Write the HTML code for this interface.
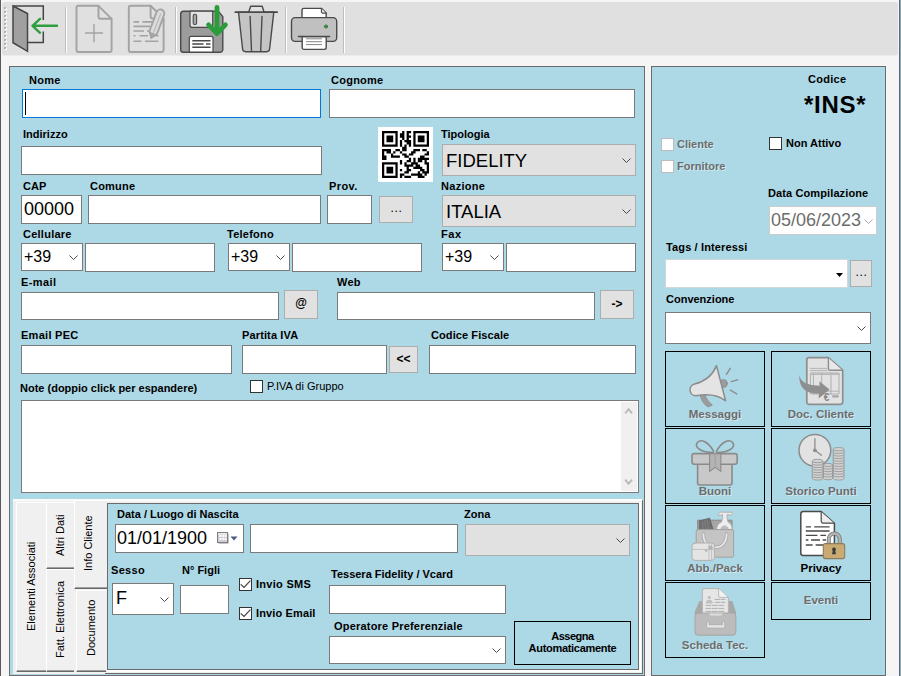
<!DOCTYPE html>
<html lang="it">
<head>
<meta charset="utf-8">
<title>Anagrafica Cliente</title>
<style>
*{box-sizing:border-box;margin:0;padding:0}
html,body{width:901px;height:676px;overflow:hidden;background:#f5f5f5;font-family:"Liberation Sans",sans-serif;font-size:11px;color:#000}
body{position:relative}
.abs,.l,.i,.c,.b,.cb,.pb{position:absolute}
.l{font-weight:bold;font-size:11px;line-height:13px;white-space:nowrap}
.n{font-weight:normal}
.i{background:#fff;border:1px solid #7a7a7a}
.c{background:#fff;border:1px solid #7a7a7a;font-size:16px;white-space:nowrap}
.c.g{background:#e1e1e1;border-color:#adadad;font-size:18.5px}
.c svg{position:absolute;right:4px;top:50%;margin-top:-2px}
.b{background:#e1e1e1;border:1px solid #adadad;text-align:center;font-size:12px;font-weight:bold}
.cb{width:13px;height:13px;background:#fff;border:1px solid #333}
.pb{border:1px solid #000;width:100px;height:76px;text-align:center;font-weight:bold;font-size:11.5px;color:#6d6d6d}
.pb span{position:absolute;left:0;right:0;white-space:nowrap;line-height:13px}
.dis{color:#6d6d6d;text-shadow:1px 1px 0 rgba(255,255,255,.45)}
#tb{left:2px;top:2px;width:896px;height:53px;background:#e0e0e0;border-radius:2px}
#main{left:9px;top:66px;width:636px;height:610px;background:#add8e6;border:1px solid #6b6b6b}
.tab{background:#f0f0f0;border-left:1px solid #fff;border-top:1px solid #fff;border-bottom:1px solid #696969;box-shadow:inset 0 -1px 0 #a0a0a0}
.vt{transform-origin:0 0;transform:rotate(-90deg)}
#side{left:651px;top:66px;width:235px;height:610px;background:#add8e6;border:1px solid #6b6b6b}
</style>
</head>
<body>
<div class="abs" style="left:0;top:0;width:1px;height:676px;background:#5a5a5a"></div>
<div class="abs" style="left:899px;top:0;width:1px;height:676px;background:#5a6a72"></div>
<div class="abs" style="left:900px;top:0;width:1px;height:676px;background:#8fa8b4"></div>
<div class="abs" id="tb"></div><div class="abs" style="left:3px;top:55px;width:894px;height:1px;background:#ebebeb"></div>

<!-- toolbar icons -->
<svg class="abs" style="left:0;top:0" width="360" height="58" viewBox="0 0 360 58">
<!-- grip -->
<g fill="#fff"><rect x="5" y="8" width="2" height="2"/><rect x="5" y="12" width="2" height="2"/><rect x="5" y="16" width="2" height="2"/><rect x="5" y="20" width="2" height="2"/><rect x="5" y="24" width="2" height="2"/><rect x="5" y="28" width="2" height="2"/><rect x="5" y="32" width="2" height="2"/><rect x="5" y="36" width="2" height="2"/><rect x="5" y="40" width="2" height="2"/><rect x="5" y="44" width="2" height="2"/><rect x="5" y="48" width="2" height="2"/></g>
<g fill="#b4b4b4"><rect x="4" y="7" width="2" height="2"/><rect x="4" y="11" width="2" height="2"/><rect x="4" y="15" width="2" height="2"/><rect x="4" y="19" width="2" height="2"/><rect x="4" y="23" width="2" height="2"/><rect x="4" y="27" width="2" height="2"/><rect x="4" y="31" width="2" height="2"/><rect x="4" y="35" width="2" height="2"/><rect x="4" y="39" width="2" height="2"/><rect x="4" y="43" width="2" height="2"/><rect x="4" y="47" width="2" height="2"/></g>
<!-- separators -->
<g><rect x="65" y="7" width="1" height="46" fill="#bdbdbd"/><rect x="66" y="7" width="1" height="46" fill="#fff"/>
<rect x="175" y="7" width="1" height="46" fill="#bdbdbd"/><rect x="176" y="7" width="1" height="46" fill="#fff"/>
<rect x="285" y="7" width="1" height="46" fill="#bdbdbd"/><rect x="286" y="7" width="1" height="46" fill="#fff"/>
<rect x="343" y="7" width="1" height="46" fill="#bdbdbd"/><rect x="344" y="7" width="1" height="46" fill="#fff"/></g>
<!-- exit door -->
<g stroke="#454545" stroke-width="1.5" fill="none" stroke-linejoin="miter">
<path d="M13 6H43.3V20M43.3 31.5V42.4H27.5"/>
<path d="M13 6L27.5 13.5V51.3L13 42.7Z" fill="#a0a0a0"/>
</g>
<path d="M57 25.8H32.5M40 18.8L32.5 25.8L40 32.8" fill="none" stroke="#2f9e3f" stroke-width="2.4" stroke-linecap="round" stroke-linejoin="round"/>
<!-- new doc (disabled) -->
<g stroke="#a3a3a3" stroke-width="1.9" fill="none" stroke-linejoin="round" stroke-linecap="round">
<path d="M78.5 5.8H98.5L111.6 18.8V50A2 2 0 0 1 109.6 52H78.5A2 2 0 0 1 76.5 50V7.8A2 2 0 0 1 78.5 5.8Z"/>
<path d="M98.5 6V16.8A2 2 0 0 0 100.5 18.8H111.4"/>
<path d="M85.5 33H102.5M94 24.5V41.8" stroke-width="1.4"/>
</g>
<!-- edit doc (disabled) -->
<g stroke="#a3a3a3" stroke-width="1.9" fill="none" stroke-linejoin="round" stroke-linecap="round">
<path d="M130.8 5.8H150.6L163.6 18.5V50A2 2 0 0 1 161.6 52H130.8A2 2 0 0 1 128.8 50V7.8A2 2 0 0 1 130.8 5.8Z"/>
<path d="M150.6 6V16.4A2 2 0 0 0 152.6 18.4H154"/>
<path d="M133.5 21.9H139M142.5 21.9H152M133.5 26.4H150M133.5 31H144M147 31H150M133.5 35.7H135.5M139.5 35.7H148M152 35.7H158.5M133.5 41.3H141.5M145 41.3H158.5" stroke-width="1.6" stroke-linecap="butt"/>
<path d="M156.5 12.1L149.5 31L151.2 38L157.1 33.8L164.1 14.9A4 4 0 0 0 156.5 12.1Z" fill="#dadada" stroke-width="1.8"/>
<path d="M149.9 32.8L151.2 38L155.6 34.9Z" fill="#a3a3a3" stroke-width="1"/>
<path d="M160.6 14L153.6 32.4" stroke-width="1" stroke="#b4b4b4"/>
</g>
<!-- save -->
<g stroke="#4a4a4a" stroke-width="1.4" stroke-linejoin="round">
<path d="M183.5 11.2H218.3L222.8 16.6V49.5A2.8 2.8 0 0 1 220 52.3H183.5A2.8 2.8 0 0 1 180.7 49.5V14A2.8 2.8 0 0 1 183.5 11.2Z" fill="#9c9c9c"/>
<path d="M190 11.2H212.7V25.3A2 2 0 0 1 210.7 27.3H192A2 2 0 0 1 190 25.3Z" fill="#e4e4e4" stroke-width="1.2"/>
<rect x="193.2" y="14.2" width="3.4" height="10.3" rx="1.5" fill="#a8a8a8" stroke-width="1.1"/>
<path d="M189.3 52V38.3A2 2 0 0 1 191.3 36.3H211A2 2 0 0 1 213 38.3V52Z" fill="#fff" stroke-width="1.2"/>
<path d="M192.3 40.7H210.5M192.3 44H203.5M206 44H210.5M192.3 47.3H210.5" stroke-width="1.4" fill="none"/>
</g>
<path d="M217 7.4V33.6M208.6 24.8L217 33.6L225.4 24.8" fill="none" stroke="#2a9d3a" stroke-width="4.8" stroke-linecap="round" stroke-linejoin="round"/>
<!-- trash -->
<g stroke="#4a4a4a" stroke-width="1.4" stroke-linejoin="round" stroke-linecap="round">
<path d="M238.5 12.2H273.8L269.6 49A3 3 0 0 1 266.6 51.7H245.6A3 3 0 0 1 242.6 49Z" fill="#c4c4c4"/>
<path d="M248.8 12L250.6 6.2H262.2L264 12" fill="#e1e1e1"/>
<path d="M235.3 12.2H277.2" stroke-width="1.7" fill="none"/>
<path d="M250.1 16.5L251.5 50.5M262 16.5L260.7 50.5" fill="none"/>
</g>
<!-- printer -->
<g stroke="#4a4a4a" stroke-width="1.4" stroke-linejoin="round" stroke-linecap="round">
<path d="M303.8 8.4H321.6L326.2 13V18H302V10.2A1.8 1.8 0 0 1 303.8 8.4Z" fill="#fff"/>
<path d="M321.4 8.6V11.8A1.3 1.3 0 0 0 322.7 13.1H326" fill="#e8e8e8" stroke-width="1.1"/>
<rect x="291.5" y="17.6" width="45.2" height="23.8" rx="3.6" fill="#c0c0c0"/>
<path d="M302.2 36.6H326.2V47.6A1.8 1.8 0 0 1 324.4 49.4H304A1.8 1.8 0 0 1 302.2 47.6Z" fill="#fff"/>
<path d="M298.4 36.5H329.6" fill="none"/>
<path d="M306.4 38.8H321.6M306.4 41.7H321.6M306.4 44.6H321.6" stroke-width=".9" stroke="#777" fill="none"/>
<circle cx="326" cy="26.5" r="1.6" fill="#2a9d3a" stroke="#3a6a3a" stroke-width=".8"/>
</g>
</svg>
<div class="abs" id="main"></div>
<div class="abs" id="side"></div>

<!-- row 1 -->
<div class="l" style="left:29px;top:74px;letter-spacing:.3px">Nome</div>
<div class="i" style="left:22px;top:89px;width:299px;height:29px;border-color:#0078d7"><div class="abs" style="left:2px;top:2px;width:1px;height:23px;background:#000"></div></div>
<div class="l" style="left:331px;top:74px;letter-spacing:0.25px">Cognome</div>
<div class="i" style="left:329px;top:89px;width:306px;height:29px"></div>

<!-- row 2 -->
<div class="l" style="left:23px;top:128px">Indirizzo</div>
<div class="i" style="left:21px;top:146px;width:301px;height:29px"></div>
<div class="l" style="left:441px;top:128px">Tipologia</div>
<div class="c g" style="left:442px;top:144px;width:194px;height:32px"><span class="abs" style="left:3px;top:5px;line-height:21px">FIDELITY</span><svg width="9" height="5" viewBox="0 0 9 5"><path d="M.5.5l4 4 4-4" fill="none" stroke="#4a4a4a" stroke-width="1"/></svg></div>

<!-- qr -->
<svg class="abs" style="left:378px;top:127px;background:#fff" width="55" height="55" viewBox="-1.79 -1.79 24.58 24.58"><path d="M0 0h7v1h-7zM9 0h1v1h-1zM11 0h2v1h-2zM14 0h7v1h-7zM0 1h1v1h-1zM6 1h1v1h-1zM8 1h2v1h-2zM11 1h1v1h-1zM14 1h1v1h-1zM20 1h1v1h-1zM0 2h1v1h-1zM2 2h3v1h-3zM6 2h1v1h-1zM8 2h2v1h-2zM11 2h2v1h-2zM14 2h1v1h-1zM16 2h3v1h-3zM20 2h1v1h-1zM0 3h1v1h-1zM2 3h3v1h-3zM6 3h1v1h-1zM9 3h1v1h-1zM11 3h1v1h-1zM14 3h1v1h-1zM16 3h3v1h-3zM20 3h1v1h-1zM0 4h1v1h-1zM2 4h3v1h-3zM6 4h1v1h-1zM8 4h1v1h-1zM10 4h3v1h-3zM14 4h1v1h-1zM16 4h3v1h-3zM20 4h1v1h-1zM0 5h1v1h-1zM6 5h1v1h-1zM8 5h1v1h-1zM11 5h2v1h-2zM14 5h1v1h-1zM20 5h1v1h-1zM0 6h7v1h-7zM8 6h1v1h-1zM10 6h1v1h-1zM12 6h1v1h-1zM14 6h7v1h-7zM9 7h2v1h-2zM0 8h4v1h-4zM6 8h2v1h-2zM9 8h2v1h-2zM14 8h3v1h-3zM18 8h2v1h-2zM0 9h1v1h-1zM2 9h2v1h-2zM5 9h1v1h-1zM8 9h1v1h-1zM13 9h2v1h-2zM20 9h1v1h-1zM0 10h1v1h-1zM4 10h1v1h-1zM9 10h2v1h-2zM12 10h2v1h-2zM19 10h2v1h-2zM0 11h2v1h-2zM4 11h4v1h-4zM10 11h2v1h-2zM17 11h2v1h-2zM0 12h2v1h-2zM12 12h1v1h-1zM14 12h1v1h-1zM16 12h5v1h-5zM8 13h1v1h-1zM11 13h2v1h-2zM14 13h1v1h-1zM16 13h2v1h-2zM19 13h1v1h-1zM0 14h7v1h-7zM8 14h1v1h-1zM10 14h1v1h-1zM13 14h3v1h-3zM19 14h2v1h-2zM0 15h1v1h-1zM6 15h1v1h-1zM10 15h4v1h-4zM15 15h2v1h-2zM20 15h1v1h-1zM0 16h1v1h-1zM2 16h3v1h-3zM6 16h1v1h-1zM11 16h1v1h-1zM14 16h4v1h-4zM20 16h1v1h-1zM0 17h1v1h-1zM2 17h3v1h-3zM6 17h1v1h-1zM8 17h1v1h-1zM11 17h2v1h-2zM17 17h2v1h-2zM20 17h1v1h-1zM0 18h1v1h-1zM2 18h3v1h-3zM6 18h1v1h-1zM10 18h2v1h-2zM16 18h1v1h-1zM18 18h3v1h-3zM0 19h1v1h-1zM6 19h1v1h-1zM8 19h2v1h-2zM13 19h5v1h-5zM19 19h1v1h-1zM0 20h7v1h-7zM8 20h1v1h-1zM10 20h3v1h-3zM16 20h3v1h-3z" fill="#000"/></svg>
<!-- row 3 -->
<div class="l" style="left:23px;top:180px">CAP</div>
<div class="i" style="left:21px;top:195px;width:61px;height:29px;font-size:18px"><span class="abs" style="left:2px;top:3px;line-height:21px">00000</span></div>
<div class="l" style="left:90px;top:180px;letter-spacing:0.2px">Comune</div>
<div class="i" style="left:88px;top:195px;width:233px;height:29px"></div>
<div class="l" style="left:329px;top:180px;letter-spacing:0.4px">Prov.</div>
<div class="i" style="left:327px;top:195px;width:45px;height:29px"></div>
<div class="b" style="left:379px;top:196px;width:34px;height:27px;line-height:23px;letter-spacing:.7px;padding-left:1px;font-weight:normal">...</div>
<div class="l" style="left:441px;top:180px;letter-spacing:0.3px">Nazione</div>
<div class="c g" style="left:442px;top:195px;width:194px;height:32px"><span class="abs" style="left:3px;top:5px;line-height:21px">ITALIA</span><svg width="9" height="5" viewBox="0 0 9 5"><path d="M.5.5l4 4 4-4" fill="none" stroke="#4a4a4a" stroke-width="1"/></svg></div>

<!-- row 4 -->
<div class="l" style="left:23px;top:228px;letter-spacing:0.25px">Cellulare</div>
<div class="c" style="left:21px;top:243px;width:62px;height:28px"><span class="abs" style="left:2px;top:4px;line-height:18px">+39</span><svg width="9" height="5" viewBox="0 0 9 5"><path d="M.5.5l4 4 4-4" fill="none" stroke="#4a4a4a" stroke-width="1"/></svg></div>
<div class="i" style="left:85px;top:243px;width:130px;height:29px"></div>
<div class="l" style="left:227px;top:228px;letter-spacing:0.25px">Telefono</div>
<div class="c" style="left:228px;top:243px;width:62px;height:28px"><span class="abs" style="left:2px;top:4px;line-height:18px">+39</span><svg width="9" height="5" viewBox="0 0 9 5"><path d="M.5.5l4 4 4-4" fill="none" stroke="#4a4a4a" stroke-width="1"/></svg></div>
<div class="i" style="left:292px;top:243px;width:130px;height:29px"></div>
<div class="l" style="left:441px;top:228px;letter-spacing:0.6px">Fax</div>
<div class="c" style="left:442px;top:243px;width:62px;height:28px"><span class="abs" style="left:2px;top:4px;line-height:18px">+39</span><svg width="9" height="5" viewBox="0 0 9 5"><path d="M.5.5l4 4 4-4" fill="none" stroke="#4a4a4a" stroke-width="1"/></svg></div>
<div class="i" style="left:506px;top:243px;width:130px;height:29px"></div>

<!-- row 5 -->
<div class="l" style="left:21px;top:276px;letter-spacing:0.4px">E-mail</div>
<div class="i" style="left:21px;top:292px;width:258px;height:28px"></div>
<div class="b" style="left:284px;top:290px;width:34px;height:29px;line-height:25px">@</div>
<div class="l" style="left:337px;top:276px;letter-spacing:0.25px">Web</div>
<div class="i" style="left:337px;top:292px;width:258px;height:28px"></div>
<div class="b" style="left:600px;top:290px;width:34px;height:29px;line-height:26px">-&gt;</div>

<!-- row 6 -->
<div class="l" style="left:21px;top:329px;letter-spacing:0.28px">Email PEC</div>
<div class="i" style="left:21px;top:345px;width:211px;height:29px"></div>
<div class="l" style="left:242px;top:329px;letter-spacing:0.13px">Partita IVA</div>
<div class="i" style="left:242px;top:345px;width:145px;height:29px"></div>
<div class="b" style="left:389px;top:346px;width:29px;height:27px;line-height:24px">&lt;&lt;</div>
<div class="l" style="left:431px;top:329px;letter-spacing:0.09px">Codice Fiscale</div>
<div class="i" style="left:429px;top:345px;width:207px;height:29px"></div>

<!-- note -->
<div class="l" style="left:20px;top:382px">Note (doppio click per espandere)</div>
<div class="cb" style="left:250px;top:380px"></div>
<div class="l n" style="left:267px;top:380px">P.IVA di Gruppo</div>
<div class="i" style="left:21px;top:400px;width:618px;height:93px"><div class="abs" style="right:1px;top:1px;bottom:1px;width:16px;background:#f0f0f0"><svg class="abs" style="left:0;top:0" width="16" height="89" viewBox="0 0 16 89"><path d="M4.2 11.3L7.6 7.2L11 11.3M4.2 77.7L7.6 81.8L11 77.7" fill="none" stroke="#b9b9b9" stroke-width="2"/></svg></div></div>

<!-- tab control -->
<div class="abs" id="tabc" style="left:13px;top:499px;width:630px;height:175px;background:#f0f0f0;border-top:2px solid #fafafa"></div>
<div class="abs" style="left:105px;top:499px;width:538px;height:175px;border-top:2px solid #fff;border-right:1px solid #696969;border-bottom:1px solid #696969"></div>
<div class="abs" style="left:107px;top:670px;width:535px;height:2px;background:#fff"></div>
<div class="abs" style="left:639px;top:502px;width:2px;height:170px;background:#fff"></div>
<div class="abs tab" style="left:16px;top:502px;width:30px;height:170px"></div>
<div class="abs tab" style="left:46px;top:502px;width:28px;height:67px"></div>
<div class="abs tab" style="left:46px;top:569px;width:28px;height:103px"></div>
<div class="abs tab" style="left:76px;top:590px;width:30px;height:82px"></div>
<div class="abs tab" style="left:74px;top:500px;width:33px;height:89px"></div>
<div class="l n vt" style="left:24.5px;top:631px">Elementi Associati</div>
<div class="l n vt" style="left:54px;top:556px">Altri Dati</div>
<div class="l n vt" style="left:54px;top:658px">Fatt. Elettronica</div>
<div class="l n vt" style="left:82px;top:571px">Info Cliente</div>
<div class="l n vt" style="left:84.5px;top:656px">Documento</div>
<div class="abs" id="page" style="left:107px;top:503px;width:532px;height:167px;background:#add8e6;border:1px solid #6b6b6b"></div>

<div class="l" style="left:117px;top:508px">Data / Luogo di Nascita</div>
<div class="i" style="left:115px;top:524px;width:129px;height:29px;font-size:18px"><span class="abs" style="left:1px;top:3px;line-height:21px">01/01/1900</span>
<svg class="abs" style="left:101px;top:7px" width="22" height="13" viewBox="0 0 22 13"><rect x="1.5" y="1.5" width="10" height="10" fill="#8a8a90"/><rect x=".5" y=".5" width="10" height="10" fill="#cfcfda" stroke="#857d7d"/><rect x="1" y="1" width="9" height="1.6" fill="#ececf2"/><path d="M2.5 3h2v2h-2zM5.5 3h2v2h-2zM2.5 6h2v2h-2zM5.5 6h2v2h-2zM8.3 3h1.4v2h-1.4zM8.3 6h1.4v2h-1.4z" fill="#fff"/><path d="M13.5 4.5h7l-3.5 4z" fill="#4c5a80"/></svg></div>
<div class="i" style="left:250px;top:524px;width:208px;height:29px"></div>
<div class="l" style="left:464px;top:508px">Zona</div>
<div class="c g" style="left:465px;top:524px;width:165px;height:32px"><svg width="9" height="5" viewBox="0 0 9 5"><path d="M.5.5l4 4 4-4" fill="none" stroke="#4a4a4a" stroke-width="1"/></svg></div>
<div class="l" style="left:111px;top:564px;letter-spacing:0.3px">Sesso</div>
<div class="c" style="left:112px;top:583px;width:62px;height:32px;font-size:18px"><span class="abs" style="left:3px;top:4px;line-height:21px">F</span><svg width="9" height="5" viewBox="0 0 9 5"><path d="M.5.5l4 4 4-4" fill="none" stroke="#4a4a4a" stroke-width="1"/></svg></div>
<div class="l" style="left:182px;top:564px">N&deg; Figli</div>
<div class="i" style="left:180px;top:585px;width:49px;height:29px"></div>
<div class="cb" style="left:239px;top:578px"><svg class="abs" style="left:0;top:0" width="11" height="11" viewBox="0 0 11 11"><path d="M.7 5.3L4 8.4L10.4 1.6" fill="none" stroke="#3c3c3c" stroke-width="1.1"/></svg></div>
<div class="l" style="left:256px;top:578px;letter-spacing:.28px">Invio SMS</div>
<div class="cb" style="left:239px;top:607px"><svg class="abs" style="left:0;top:0" width="11" height="11" viewBox="0 0 11 11"><path d="M.7 5.3L4 8.4L10.4 1.6" fill="none" stroke="#3c3c3c" stroke-width="1.1"/></svg></div>
<div class="l" style="left:256px;top:607px;letter-spacing:.13px">Invio Email</div>
<div class="l" style="left:331px;top:568px">Tessera Fidelity / Vcard</div>
<div class="i" style="left:329px;top:585px;width:177px;height:29px"></div>
<div class="l" style="left:334px;top:620px;letter-spacing:.2px">Operatore Preferenziale</div>
<div class="c" style="left:329px;top:636px;width:177px;height:28px"><svg width="9" height="5" viewBox="0 0 9 5"><path d="M.5.5l4 4 4-4" fill="none" stroke="#4a4a4a" stroke-width="1"/></svg></div>
<div class="abs l" style="left:514px;top:621px;width:117px;height:44px;border:1px solid #000;text-align:center;padding-top:8px;line-height:12px;letter-spacing:-.3px"><span style="letter-spacing:-.5px">Assegna</span><br>Automaticamente</div>

<!-- side panel -->
<div class="l" style="left:808px;top:73px;letter-spacing:0.27px">Codice</div>
<div class="l" style="left:804px;top:91px;font-size:24px;line-height:28px;letter-spacing:.7px">*INS*</div>
<div class="cb" style="left:661px;top:138px;border-color:#bcbcbc"></div>
<div class="l dis" style="left:677px;top:138px">Cliente</div>
<div class="cb" style="left:661px;top:160px;border-color:#bcbcbc"></div>
<div class="l dis" style="left:677px;top:160px">Fornitore</div>
<div class="cb" style="left:769px;top:137px"></div>
<div class="l" style="left:786px;top:137px">Non Attivo</div>
<div class="l" style="left:768px;top:187px;letter-spacing:0.11px">Data Compilazione</div>
<div class="c" style="left:769px;top:206px;width:108px;height:29px;font-size:18px;border-color:#ccc;color:#6d6d6d"><span class="abs" style="left:1px;top:3px;line-height:21px">05/06/2023</span><svg width="9" height="5" viewBox="0 0 9 5" style="right:3px"><path d="M.5.5l4 4 4-4" fill="none" stroke="#aaa" stroke-width="1"/></svg></div>
<div class="l" style="left:666px;top:241px;letter-spacing:0.14px">Tags / Interessi</div>
<div class="c" style="left:665px;top:259px;width:183px;height:29px;border-color:#d0d8dc"><svg width="7" height="4" viewBox="0 0 7 4" style="right:4px;margin-top:-1px"><path d="M0 0h7L3.5 4z" fill="#000"/></svg></div>
<div class="b" style="left:850px;top:260px;width:22px;height:27px;line-height:23px;letter-spacing:.7px;padding-left:1px;font-weight:normal">...</div>
<div class="l" style="left:666px;top:293px">Convenzione</div>
<div class="c" style="left:665px;top:312px;width:206px;height:32px"><svg width="9" height="5" viewBox="0 0 9 5"><path d="M.5.5l4 4 4-4" fill="none" stroke="#4a4a4a" stroke-width="1"/></svg></div>
<div class="pb" style="left:665px;top:351px"><span class="dis" style="top:56px">Messaggi</span></div>
<div class="pb" style="left:771px;top:351px"><span class="dis" style="top:56px">Doc. Cliente</span></div>
<div class="pb" style="left:665px;top:428px"><span class="dis" style="top:56px">Buoni</span></div>
<div class="pb" style="left:771px;top:428px"><span class="dis" style="top:56px">Storico Punti</span></div>
<div class="pb" style="left:665px;top:505px"><span class="dis" style="top:56px">Abb./Pack</span></div>
<div class="pb" style="left:771px;top:505px;color:#000"><span style="top:56px">Privacy</span></div>
<div class="pb" style="left:665px;top:582px"><span class="dis" style="top:56px">Scheda Tec.</span></div>
<div class="pb" style="left:771px;top:582px;height:38px"><span class="dis" style="top:10.5px">Eventi</span></div>

<!-- side icons -->
<svg class="abs" style="left:651px;top:340px" width="235" height="330" viewBox="651 340 235 330">
<!-- megaphone -->
<g stroke="#8c8c8c" stroke-width="1.5" stroke-linejoin="round" stroke-linecap="round">
<path d="M700.2 395.6C701.5 400.5 704 404.5 708 407L712.3 405C708.5 402 706.3 398.8 705.3 395.2Z" fill="#9c9c9c" stroke-width=".9"/>
<circle cx="723.4" cy="383.5" r="3.9" fill="#9c9c9c" stroke-width=".8"/>
<path d="M716.5 365.6L725.6 400.8C717.5 394.5 706.5 393.8 696 395.8A6 6 0 0 1 694.5 384C704.5 381.5 712.5 375.5 716.5 365.6Z" fill="#e4e4e4"/>
<path d="M726.4 374.4L730.3 368.3M731.3 381.6L737.6 379.8M730.4 390.1L736.9 394" fill="none" stroke-width="1.4"/>
</g>
<!-- doc cliente -->
<g stroke="#8e8e8e" stroke-width="1.7" stroke-linejoin="round" stroke-linecap="round">
<path d="M809 357.7H828.4L842.7 370.2V402.1A2.2 2.2 0 0 1 840.5 404.3H809A2.2 2.2 0 0 1 806.8 402.1V359.9A2.2 2.2 0 0 1 809 357.7Z" fill="#e2e2e2"/>
<path d="M828.4 358V368.2A2 2 0 0 0 830.4 370.2H842.4" fill="#e8e8e8" stroke-width="1.4"/>
<path d="M810.3 368.4H827.2M810.3 370.6H827.2" fill="none" stroke-width=".8" stroke="#a4a4a4"/>
<path d="M810.8 373H839V394H810.8ZM813.4 373V394M821.7 373V394M831 373V394M810.8 391.2H839" fill="none" stroke-width="1" stroke="#b0b0b0"/>
<path d="M810.8 374.2H839" fill="none" stroke-width="1.6" stroke="#b8b8b8"/>
<rect x="832.3" y="395.3" width="6.3" height="2.2" fill="#a4a4a4" stroke="none"/>
</g>
<path d="M799.3 374.6C800 380 804 385.5 819.6 385.8L819.3 381.3L829.6 389.5L818.6 398.6L819 393.6C806 394.5 798.5 388 799.3 374.6Z" fill="#8f8f8f"/>
<text x="823.8" y="400.8" font-family="Liberation Sans,sans-serif" font-size="10" font-weight="bold" fill="#858585">&#8364;</text>
<!-- gift -->
<g stroke="#8a8a8a" stroke-width="1.6" stroke-linejoin="round" stroke-linecap="round">
<path d="M713.6 451.4C708 441.5 701 438.8 697.6 442.2C694 446 698.5 452 713 452.6M716.4 451.4C722 441.5 729 438.8 732.4 442.2C736 446 731.5 452 717 452.6" fill="none"/>
<rect x="697.6" y="463" width="34.4" height="22" rx="2" fill="#c8c8c8"/>
<rect x="692" y="453.6" width="45.2" height="10.6" rx="2.2" fill="#c8c8c8"/>
<path d="M709.6 453.6H720.8V471.4L715.2 467.4L709.6 471.4Z" fill="#b4b4b4" stroke-width="1.1"/>
<path d="M715.2 454.5V466" stroke="#a0a0a0" stroke-width="1.1"/>
</g>
<!-- clock + coins -->
<g stroke="#8c8c8c" stroke-width="1.5" stroke-linecap="round">
<circle cx="814.9" cy="450.3" r="15.9" fill="#e2e2e2"/>
<path d="M814.9 438.6V450.3L821.4 455.2" fill="none" stroke-width="1.3"/>
<circle cx="814.9" cy="450.3" r="1.9" fill="#8e8e8e" stroke="none"/>
</g>
<g stroke="#909090" stroke-width=".8" fill="#d2d2d2">
<path d="M812.2 461V478.4A5.4 1.7 0 0 0 823 478.4V461Z"/>
<ellipse cx="817.6" cy="461" rx="5.4" ry="1.7"/>
<path d="M812.2 463.5A5.4 1.7 0 0 0 823 463.5M812.2 466A5.4 1.7 0 0 0 823 466M812.2 468.5A5.4 1.7 0 0 0 823 468.5M812.2 471A5.4 1.7 0 0 0 823 471M812.2 473.5A5.4 1.7 0 0 0 823 473.5M812.2 476A5.4 1.7 0 0 0 823 476" fill="none"/>
<path d="M823.4 465V478.2A4.6 1.6 0 0 0 832.6 478.2V465Z"/>
<ellipse cx="828" cy="465" rx="4.6" ry="1.6"/>
<path d="M823.4 467.6A4.6 1.6 0 0 0 832.6 467.6M823.4 470.2A4.6 1.6 0 0 0 832.6 470.2M823.4 472.8A4.6 1.6 0 0 0 832.6 472.8M823.4 475.4A4.6 1.6 0 0 0 832.6 475.4" fill="none"/>
<path d="M833.2 449.2V478.4A5.4 1.7 0 0 0 844 478.4V449.2Z"/>
<ellipse cx="838.6" cy="449.2" rx="5.4" ry="1.7"/>
<path d="M833.2 451.8A5.4 1.7 0 0 0 844 451.8M833.2 454.4A5.4 1.7 0 0 0 844 454.4M833.2 457A5.4 1.7 0 0 0 844 457M833.2 459.6A5.4 1.7 0 0 0 844 459.6M833.2 462.2A5.4 1.7 0 0 0 844 462.2M833.2 464.8A5.4 1.7 0 0 0 844 464.8M833.2 467.4A5.4 1.7 0 0 0 844 467.4M833.2 470A5.4 1.7 0 0 0 844 470M833.2 472.6A5.4 1.7 0 0 0 844 472.6M833.2 475.2A5.4 1.7 0 0 0 844 475.2" fill="none"/>
</g>
<!-- bag / pack -->
<g stroke="#a2a2a2" stroke-width="1" stroke-linejoin="round" stroke-linecap="round">
<rect x="698" y="520.2" width="34" height="10" fill="#a6a6a6" stroke="#8a8a8a"/>
<path d="M699.8 520.8L709.6 518.2L713 529.6H699.8Z" fill="#707070" stroke="#5c5c5c" stroke-width=".8"/>
<path d="M702.4 520.6L703.4 529M704.8 520L706 529M707.2 519.4L708.6 529" stroke="#8c8c8c" stroke-width=".6" fill="none"/>
<path d="M718.6 515.4C718.2 512.4 720 511.8 723 512.2H731C732.6 512.2 733 514.4 731.6 515.2L727 514.6V517.4L728 522C731 523.4 732.2 526 732.2 529.6H716.6C716.6 526 718.2 523.2 721.6 522L722.6 517.4V515Z" fill="#eee" stroke="#b0b0b0"/>
<path d="M720.4 529.6A4.2 4.2 0 0 1 728.8 529.6" fill="#bdbdbd" stroke="none"/>
<rect x="696.2" y="529.6" width="37.4" height="27.6" rx="1.6" fill="#c4c4c4"/>
<path d="M703.4 534C703.4 542.5 708 547.4 715 547.4C722 547.4 726.6 542.5 726.6 534" fill="none" stroke="#a0a0a0" stroke-width="3.4"/>
<path d="M703.4 534C703.4 542.5 708 547.4 715 547.4C722 547.4 726.6 542.5 726.6 534" fill="none" stroke="#e6e6e6" stroke-width="2"/>
<rect x="692" y="543" width="22.4" height="17.4" rx="3" fill="#e4e4e4" stroke="#b0b0b0"/>
<path d="M692.2 549.4H714.2M709 543.2V560.2M711.6 543.2V560.2" fill="none" stroke="#bcbcbc" stroke-width=".9"/>
<circle cx="710.6" cy="547.6" r="2.2" fill="#b4b4b4" stroke="none"/><circle cx="706.2" cy="550.6" r="1.4" fill="#b8b8b8" stroke="none"/>
</g>
<!-- privacy -->
<g stroke="#4a4a4a" stroke-width="1.5" stroke-linejoin="round" stroke-linecap="round">
<path d="M803.2 511.6H821.2L834.4 523.2V553A2.4 2.4 0 0 1 832 555.4H803.2A2.4 2.4 0 0 1 800.8 553V514A2.4 2.4 0 0 1 803.2 511.6Z" fill="#fff"/>
<path d="M821.2 511.8V520.8A2.4 2.4 0 0 0 823.6 523.2H834.2" fill="#eee" stroke-width="1.2"/>
<path d="M805.8 526.9H811M814.2 526.9H829.6M805.8 531H829.6M805.8 535.3H817.4M820.4 535.3H826M805.8 540H808.4M811 540H820M822.6 540H826M805.8 545H812.6M815.6 545H823.2" fill="none" stroke-width="1.3" stroke-linecap="butt"/>
</g>
<path d="M828.8 544V539A5.5 5.5 0 0 1 839.8 539V544" fill="none" stroke="#767676" stroke-width="4"/>
<path d="M828.8 544V539A5.5 5.5 0 0 1 839.8 539V544" fill="none" stroke="#b4b4b4" stroke-width="2.4"/>
<rect x="823.3" y="543.6" width="21.4" height="15" rx="2" fill="#c9aa72" stroke="#8c7c5e" stroke-width="1.1"/>
<path d="M834 547.4A1.9 1.9 0 0 1 835.2 550.8L836 554.2H832L832.8 550.8A1.9 1.9 0 0 1 834 547.4Z" fill="#3c3c3c"/>
<!-- scheda tec -->
<g stroke="#a6a6a6" stroke-width="1" stroke-linejoin="round" stroke-linecap="round">
<path d="M700 601.6H732L735.8 613.4H695Z" fill="#a8a8a8"/>
<path d="M703.8 588.6H718.6L728.4 597.4V614.6H702.4V590A1.4 1.4 0 0 1 703.8 588.6Z" fill="#e6e6e6" stroke="#b4b4b4"/>
<path d="M718.6 588.8V596A1.4 1.4 0 0 0 720 597.4H728.2" fill="#f2f2f2" stroke="#b4b4b4" stroke-width=".9"/>
<circle cx="709.3" cy="597.4" r="1.7" fill="#c0c0c0" stroke="none"/>
<path d="M705.8 603.6A3.5 3.8 0 0 1 712.8 603.6Z" fill="#c0c0c0" stroke="none"/>
<path d="M715 599.4H725M715 602.3H725M706 605.4H725M706 608.4H725M706 611.4H725" fill="none" stroke="#a8a8a8" stroke-width=".9" stroke-dasharray="5 1.4"/>
<rect x="695" y="613" width="40.8" height="22.2" rx="3" fill="#bcbcbc"/>
<path d="M709 613.4H722.6L721.4 615.6H710.2Z" fill="#dedede" stroke="none"/>
<path d="M706.6 622.6A1.2 1.2 0 0 1 709 622.6V624.6H722.4V622.6A1.2 1.2 0 0 1 724.8 622.6V627A1.2 1.2 0 0 1 723.6 628.2H707.8A1.2 1.2 0 0 1 706.6 627Z" fill="#e2e2e2" stroke="#a8a8a8" stroke-width=".8"/>
</g>
</svg>

</body>
</html>
